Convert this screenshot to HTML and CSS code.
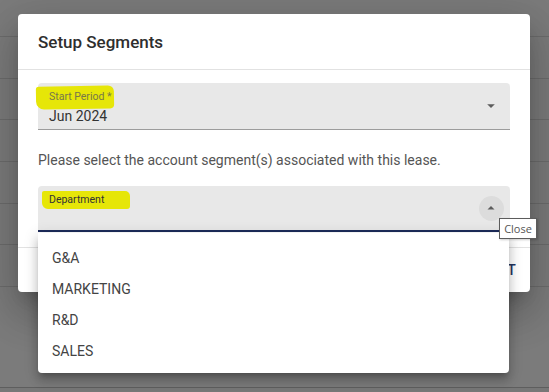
FILE: index.html
```html
<!DOCTYPE html>
<html>
<head>
<meta charset="utf-8">
<link rel="stylesheet" href="styles.css">
</head>
<body>
<div class="page">
  <div class="rows">
    <div class="row first"></div>
    <div class="row"></div>
    <div class="row"></div>
    <div class="row"></div>
    <div class="row"></div>
    <div class="row"></div>
    <div class="row"></div>
  </div>
  <div class="page-foot"></div>
</div>

<div class="dialog">
  <div class="dialog-head">Setup Segments</div>
  <div class="dialog-body">
    <div class="field">
      <div class="field-main">
        <span class="label hl hl-start">Start Period *</span>
        <span class="value">Jun 2024</span>
      </div>
      <span class="icon">
        <svg width="24" height="24" viewBox="0 0 24 24"><path d="M8.2 10.2l3.8 3.8 3.8-3.8z" fill="#5c5c5c"/></svg>
      </span>
    </div>
    <p class="note">Please select the account segment(s) associated with this lease.</p>
    <div class="field focused">
      <div class="field-main top">
        <span class="label dark hl hl-dept">Department</span>
      </div>
      <span class="icon hover">
        <svg width="24" height="24" viewBox="0 0 24 24"><path d="M8.5 13.5l3.5-3.5 3.5 3.5z" fill="#5c5c5c"/></svg>
      </span>
    </div>
  </div>
  <div class="dialog-foot">
    <span class="btn">NEXT</span>
  </div>
</div>

<ul class="menu">
  <li>G&amp;A</li>
  <li>MARKETING</li>
  <li>R&amp;D</li>
  <li>SALES</li>
</ul>

<div class="tooltip">Close</div>
</body>
</html>
```

FILE: styles.css
```css
html, body {
  margin: 0;
  padding: 0;
}
body {
  width: 549px;
  height: 392px;
  overflow: hidden;
  background: #7b7b7b;
  font-family: Roboto, "Liberation Sans", sans-serif;
}
.page {
  height: 392px;
  display: flex;
  flex-direction: column;
}
.rows {
  height: 387px;
}
.row {
  height: 40.7px;
  border-bottom: 1px solid #6c6c6c;
}
.row.first {
  height: 36px;
}
.page-foot {
  flex: 1;
  border-top: 1px solid #5e5e5e;
  background: #777;
}

.dialog {
  position: absolute;
  left: 18px;
  top: 14px;
  width: 512px;
  background: #fff;
  border-radius: 4px;
  box-shadow: 0 11px 15px -7px rgba(0,0,0,0.2), 0 24px 38px 3px rgba(0,0,0,0.14), 0 9px 46px 8px rgba(0,0,0,0.12);
}
.dialog-head {
  box-sizing: border-box;
  height: 56px;
  padding: 0 20px;
  display: flex;
  align-items: center;
  border-bottom: 1px solid #e2e2e2;
  font-size: 17px;
  font-weight: 500;
  color: #2e2e2e;
}
.dialog-body {
  padding: 13px 20px 15px;
}
.field {
  box-sizing: border-box;
  height: 47px;
  background: #e8e8e8;
  border-radius: 4px 4px 0 0;
  border-bottom: 1px solid #9c9c9c;
  display: flex;
  align-items: center;
  padding-left: 11px;
  padding-right: 7px;
}
.field.focused {
  height: 46px;
  border-bottom: 2px solid #1c2b5a;
}
.field-main {
  flex: 1;
  display: flex;
  flex-direction: column;
  align-items: flex-start;
  padding-top: 2px;
}
.field-main.top {
  align-self: flex-start;
  padding-top: 7px;
}
.label {
  font-size: 10.5px;
  line-height: 13px;
  color: #77774a;
}
.label.dark {
  color: #333;
}
.hl {
  position: relative;
  z-index: 0;
}
.hl::before {
  content: "";
  position: absolute;
  z-index: -1;
  background: #e6e608;
}
.hl-start::before {
  left: -13px;
  right: -2px;
  top: -4px;
  bottom: -6px;
  border-radius: 3px 6px 4px 8px;
  transform: rotate(-1deg);
}
.hl-dept::before {
  left: -7px;
  right: -26px;
  top: -2px;
  bottom: -3px;
  border-radius: 2px 5px 3px 6px;
}
.value {
  margin-top: 5px;
  font-size: 14px;
  line-height: 17px;
  color: #333;
}
.icon {
  width: 24px;
  height: 24px;
  display: flex;
  align-items: center;
  justify-content: center;
}
.icon svg {
  display: block;
}
.icon.hover {
  width: 25px;
  height: 25px;
  margin-right: -0.5px;
  border-radius: 50%;
  background: #dcdcdc;
}
.note {
  margin: 20px 0 16px;
  font-size: 14px;
  line-height: 20px;
  color: #555;
}
.dialog-foot {
  box-sizing: border-box;
  height: 45px;
  border-top: 1px solid #e2e2e2;
  display: flex;
  align-items: center;
  justify-content: flex-end;
  padding-right: 14px;
}
.btn {
  font-size: 14px;
  font-weight: 500;
  color: #24345f;
  letter-spacing: 0.3px;
}

.menu {
  position: absolute;
  left: 38px;
  top: 233px;
  width: 471px;
  height: 140px;
  box-sizing: border-box;
  margin: 0;
  padding: 10px 0 6px;
  list-style: none;
  background: #fff;
  border-radius: 0 0 4px 4px;
  box-shadow: 0 5px 5px -3px rgba(0,0,0,0.2), 0 8px 10px 1px rgba(0,0,0,0.14), 0 3px 14px 2px rgba(0,0,0,0.12);
}
.menu li {
  height: 31px;
  line-height: 31px;
  padding-left: 14px;
  font-size: 14px;
  color: #444;
}

.tooltip {
  position: absolute;
  left: 499px;
  top: 218px;
  box-sizing: border-box;
  height: 21px;
  width: 38px;
  border: 1px solid #5c5c5c;
  background: #fff;
  font-family: "Open Sans", "Liberation Sans", sans-serif;
  font-size: 11px;
  line-height: 19px;
  text-align: center;
  color: #555;
  box-shadow: 1px 1px 2px rgba(0,0,0,0.2);
}
```
